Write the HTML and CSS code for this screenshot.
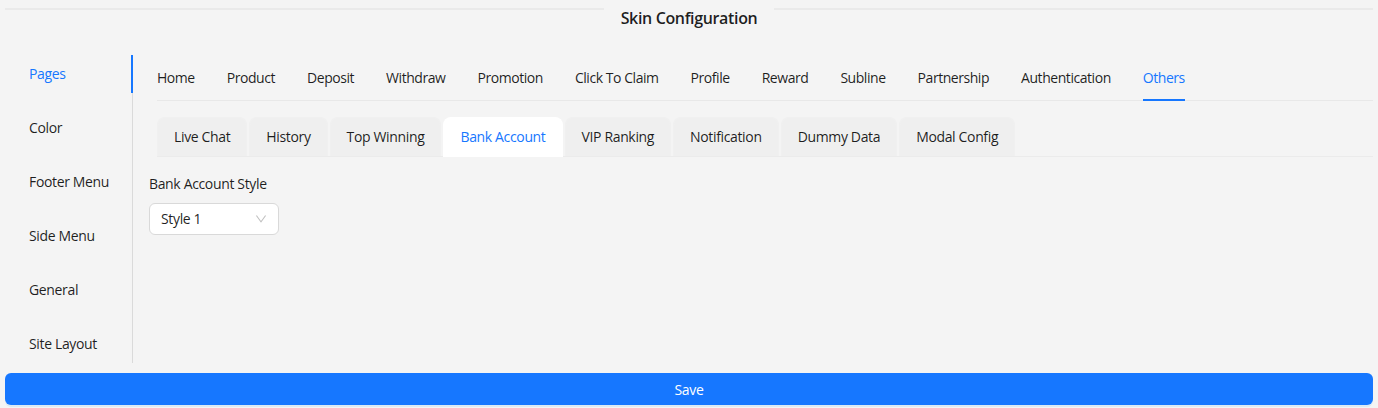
FILE: index.html
```html
<!DOCTYPE html>
<html lang="en">
<head>
<meta charset="utf-8">
<title>Skin Configuration</title>
<link rel="stylesheet" href="styles.css">
</head>
<body>
<div class="page">
  <div class="title-divider">
    <span class="title-line"></span>
    <span class="title">Skin Configuration</span>
    <span class="title-line"></span>
  </div>
  <div class="layout">
    <nav class="side-nav">
      <div class="side-item active">Pages</div>
      <div class="side-item">Color</div>
      <div class="side-item">Footer Menu</div>
      <div class="side-item">Side Menu</div>
      <div class="side-item">General</div>
      <div class="side-item">Site Layout</div>
    </nav>
    <section class="content">
      <div class="top-tabs">
        <div class="top-tab">Home</div>
        <div class="top-tab">Product</div>
        <div class="top-tab">Deposit</div>
        <div class="top-tab">Withdraw</div>
        <div class="top-tab">Promotion</div>
        <div class="top-tab">Click To Claim</div>
        <div class="top-tab">Profile</div>
        <div class="top-tab">Reward</div>
        <div class="top-tab">Subline</div>
        <div class="top-tab">Partnership</div>
        <div class="top-tab">Authentication</div>
        <div class="top-tab active">Others</div>
      </div>
      <div class="card-tabs">
        <div class="card-tab">Live Chat</div>
        <div class="card-tab">History</div>
        <div class="card-tab">Top Winning</div>
        <div class="card-tab active">Bank Account</div>
        <div class="card-tab">VIP Ranking</div>
        <div class="card-tab">Notification</div>
        <div class="card-tab">Dummy Data</div>
        <div class="card-tab">Modal Config</div>
      </div>
      <div class="form-item">
        <label class="form-label">Bank Account Style</label>
        <div class="select">
          <span class="select-value">Style 1</span>
          <svg class="select-arrow" viewBox="64 64 896 896" width="12" height="12" aria-hidden="true"><path d="M884 256h-75c-5.1 0-9.9 2.5-12.9 6.6L512 654.2 227.9 262.6c-3-4.1-7.8-6.6-12.9-6.6h-75c-6.5 0-10.3 7.4-6.5 12.7l352.6 486.1c12.8 17.6 39 17.6 51.7 0l352.6-486.1c3.9-5.3.1-12.7-6.4-12.7z"/></svg>
        </div>
      </div>
    </section>
  </div>
  <button class="save-btn" type="button">Save</button>
</div>
</body>
</html>
```

FILE: styles.css
```css
html, body {
  margin: 0;
  padding: 0;
  background: #f4f4f4;
}

body {
  font-family: "Open Sans", "Noto Sans", "Liberation Sans", sans-serif;
  font-size: 14px;
  letter-spacing: -0.35px;
  color: rgba(0, 0, 0, 0.88);
}

.page {
  padding: 0 5px;
  height: 408px;
  box-sizing: border-box;
}

.title-divider {
  display: flex;
  align-items: flex-start;
  padding-top: 7px;
  margin-bottom: 26px;
}

.title-line {
  flex: 1;
  height: 2px;
  margin-top: 1px;
  background: #eaeaea;
}

.title {
  padding: 0 17px;
  font-size: 16px;
  font-weight: 600;
  line-height: 22px;
  color: rgba(0, 0, 0, 0.88);
}

.layout {
  display: flex;
  margin-bottom: 10px;
}

.side-nav {
  width: 128px;
  flex: none;
  box-sizing: border-box;
  border-right: 1px solid #dadada;
  display: flex;
  flex-direction: column;
  gap: 16px;
}

.side-item {
  position: relative;
  padding: 8px 24px;
  line-height: 22px;
  white-space: nowrap;
}

.side-item.active {
  color: #1677ff;
}

.side-item.active::after {
  content: "";
  position: absolute;
  top: 0;
  bottom: 0;
  right: -1px;
  width: 2px;
  background: #1677ff;
}

.content {
  flex: 1;
  min-width: 0;
  padding-left: 24px;
}

.top-tabs {
  display: flex;
  gap: 32px;
  border-bottom: 1px solid #e8e8e8;
  margin-bottom: 16px;
  letter-spacing: -0.45px;
}

.top-tab {
  position: relative;
  padding: 12px 0 11px;
  line-height: 22px;
  white-space: nowrap;
}

.top-tab.active {
  color: #1677ff;
}

.top-tab.active::after {
  content: "";
  position: absolute;
  left: 0;
  right: 0;
  bottom: -1px;
  height: 2px;
  background: #1677ff;
}

.card-tabs {
  display: flex;
  gap: 2px;
  border-bottom: 1px solid #ebebeb;
  margin-bottom: 16px;
}

.card-tab {
  padding: 8px 16px;
  line-height: 22px;
  background: #efefef;
  border: 1px solid #f0f0f0;
  border-bottom: 0;
  border-radius: 8px 8px 0 0;
  white-space: nowrap;
}

.card-tab.active {
  background: #ffffff;
  border-color: #ffffff;
  color: #1677ff;
  padding-bottom: 9px;
  margin-bottom: -1px;
}

.form-item {
  margin-left: -8px;
}

.form-label {
  display: block;
  line-height: 22px;
  padding-bottom: 8px;
}

.select {
  width: 130px;
  height: 32px;
  box-sizing: border-box;
  display: flex;
  align-items: center;
  justify-content: space-between;
  padding: 0 11px;
  background: #ffffff;
  border: 1px solid #d9d9d9;
  border-radius: 6px;
}

.select-value {
  line-height: 30px;
}

.select-arrow {
  fill: rgba(0, 0, 0, 0.25);
}

.save-btn {
  display: block;
  width: 100%;
  height: 32px;
  border: 0;
  border-radius: 6px;
  background: #1677ff;
  color: #ffffff;
  font-family: inherit;
  font-size: 14px;
  letter-spacing: inherit;
  box-shadow: 0 2px 0 rgba(5, 145, 255, 0.1);
  cursor: pointer;
}
```
